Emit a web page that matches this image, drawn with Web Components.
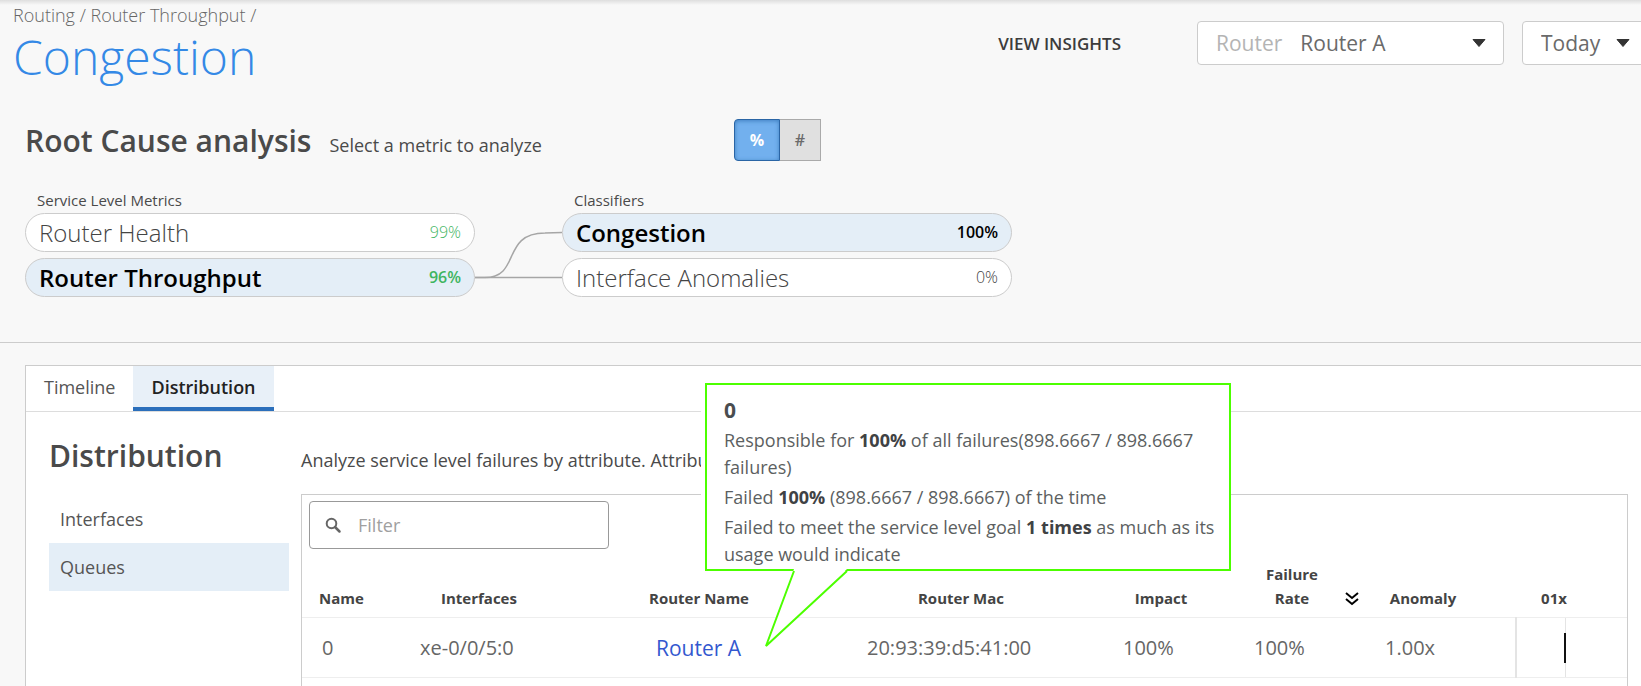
<!DOCTYPE html>
<html lang="en">
<head>
<meta charset="utf-8">
<title>Congestion</title>
<style>
  body{
    margin:0;
    font-family:"Open Sans", sans-serif;
    font-size:18px;
    color:#4a4a4a;
    background-color:#f8f8f8;
    overflow:hidden;
  }
</style>
</head>
<body>
<insights-page></insights-page>

<script>
window.customElements.define('page-header',
class Element extends HTMLElement {

  html(){
    return `
    <div class="titles">
      <nav><a href="#routing">Routing</a> / <a href="#throughput">Router Throughput</a> /</nav>
      <h1><slot></slot></h1>
    </div>
    <div class="tools">
      <a class="insights" href="#insights">VIEW INSIGHTS</a>
      <drop-down label="Router" value="Router A" class="router"></drop-down>
      <drop-down value="Today" class="date"></drop-down>
    </div>
    `;
  }

  style(){
    return `
    :host{
      display:flex;
      justify-content:space-between;
      height:108px;
      padding-left:13px;
      margin-right:-7px;
      background:linear-gradient(#dedede, #f8f8f8 5px);
    }

    nav{
      padding-top:3px;
      font-weight:300;
      line-height:24px;
      color:#666;
    }

    a{
      color:inherit;
      text-decoration:none;
    }

    h1{
      margin:0;
      font-size:48px;
      font-weight:300;
      line-height:60px;
      color:#3489e6;
    }

    .tools{
      display:flex;
      align-items:center;
      height:44px;
      padding-top:21px;
    }

    .insights{
      font-size:17px;
      font-weight:600;
      color:#3c3c3c;
      margin-right:76px;
    }

    .router{
      width:307px;
      margin-right:18px;
    }

    .date{
      width:126px;
    }
    `;
  }

  constructor(){super();
    this.attachShadow({mode:'open'});
    this.render();
  }

  render(){
    this.shadowRoot.innerHTML = `
      <style>${this.style()}</style>
      ${this.html()}
    `;
  }

})

window.customElements.define('drop-down',
class Element extends HTMLElement {

  html(){
    const label = this.getAttribute('label');
    const value = this.getAttribute('value');
    return `
    ${label ? `<label for="list">${label}</label>` : ''}
    <select id="list" ${label ? '' : 'aria-label="Date"'}>
      <option>${value}</option>
    </select>
    <svg width="14" height="8" viewBox="0 0 14 8"><path d="M1 0.5H13L7 7.5Z" fill="#333" stroke="#333" stroke-linejoin="round"/></svg>
    `;
  }

  style(){
    return `
    :host{
      display:flex;
      align-items:center;
      gap:18px;
      box-sizing:border-box;
      height:44px;
      padding:0 17px 0 18px;
      font-size:21px;
      background-color:#fff;
      border:1px solid #ccc;
      border-radius:4px;
    }

    label{
      color:#b4b4b4;
    }

    select{
      flex:1;
      min-width:0;
      padding:0;
      font:inherit;
      color:#6a6a6a;
      appearance:none;
      background:none;
      border:none;
    }

    svg{
      flex:none;
      margin-left:-18px;
    }
    `;
  }

  constructor(){super();
    this.attachShadow({mode:'open'});
  }

  connectedCallback(){
    this.shadowRoot.innerHTML = `
      <style>${this.style()}</style>
      ${this.html()}
    `;
  }

})

window.customElements.define('unit-toggle',
class Element extends HTMLElement {

  html(){
    return `
    <button class="activo">%</button>
    <button>#</button>
    `;
  }

  style(){
    return `
    :host{
      display:flex;
    }

    button{
      height:42px;
      width:41px;
      padding:0;
      font:600 16px "Open Sans", sans-serif;
      color:#6b6b6b;
      background-color:#e0e0e0;
      border:1px solid #aaa;
      border-left:none;
      cursor:pointer;
    }

    button:first-of-type{
      width:46px;
      border-left:1px solid #aaa;
      border-radius:4px 0 0 4px;
    }

    button.activo{
      font-weight:700;
      color:#fff;
      background-color:#72b0ee;
      border:1px solid #2a65a5;
      box-shadow:inset 0 1px 4px #3f7fc0;
    }
    `;
  }

  constructor(){super();
    this.attachShadow({mode:'open'});
    this.shadowRoot.innerHTML = `
      <style>${this.style()}</style>
      ${this.html()}
    `;
  }

  connectedCallback(){
    const btns = this.shadowRoot.querySelectorAll('button');

    btns.forEach(btn => btn.addEventListener('click',()=>{
      btns.forEach(b => b.classList.toggle('activo', b === btn));
    }))
  }

})

window.customElements.define('metric-pill',
class Element extends HTMLElement {

  html(){
    return `
    <button>
      <span><slot></slot></span>
      <span class="value">${this.getAttribute('value')}</span>
    </button>
    `;
  }

  style(){
    return `
    :host{
      display:block;
    }

    button{
      display:flex;
      align-items:center;
      justify-content:space-between;
      box-sizing:border-box;
      width:100%;
      height:39px;
      padding:0 13px 1px;
      font:300 24px "Open Sans", sans-serif;
      color:#444;
      background-color:#fff;
      border:1px solid #ccc;
      border-radius:20px;
      cursor:pointer;
    }

    .value{
      font-size:16px;
      color:var(--value-color, inherit);
    }

    :host([selected]) button{
      font-weight:600;
      color:#000;
      background-color:#e4eef7;
    }
    `;
  }

  constructor(){super();
    this.attachShadow({mode:'open'});
  }

  connectedCallback(){
    this.shadowRoot.innerHTML = `
      <style>${this.style()}</style>
      ${this.html()}
    `;
  }

})

window.customElements.define('root-cause',
class Element extends HTMLElement {

  html(){
    return `
    <header>
      <div class="heading">
        <h2>Root Cause analysis</h2>
        <p>Select a metric to analyze</p>
      </div>
      <unit-toggle></unit-toggle>
    </header>
    <div class="flow">
      <section>
        <h3>Service Level Metrics</h3>
        <metric-pill value="99%" class="good">Router Health</metric-pill>
        <metric-pill value="96%" class="good" selected>Router Throughput</metric-pill>
      </section>
      <svg width="87" height="84" viewBox="0 0 87 84" fill="none" stroke="#a6a6a6" stroke-width="1.5">
        <path d="M0 64.5H87"/>
        <path d="M0 64.5H10C46 64.5 26 20 70 20L87 19.500"/>
      </svg>
      <section>
        <h3>Classifiers</h3>
        <metric-pill value="100%" selected>Congestion</metric-pill>
        <metric-pill value="0%">Interface Anomalies</metric-pill>
      </section>
    </div>
    `;
  }

  style(){
    return `
    :host{
      display:block;
      padding:11px 25px 45px;
      border-bottom:1px solid #ccc;
    }

    header{
      display:flex;
      align-items:center;
    }

    .heading{
      display:flex;
      align-items:baseline;
      gap:18px;
      width:709px;
      padding-top:2px;
    }

    h2, h3, p{
      margin:0;
    }

    h2{
      font-size:30px;
      font-weight:600;
      line-height:40px;
    }

    .flow{
      display:flex;
      align-items:flex-end;
      margin-top:29px;
    }

    section{
      display:flex;
      flex-direction:column;
      gap:6px;
      width:450px;
    }

    h3{
      padding-left:12px;
      margin-bottom:-4px;
      font-size:15px;
      font-weight:400;
      line-height:21px;
    }

    .good{
      --value-color:#3fb55f;
    }
    `;
  }

  constructor(){super();
    this.attachShadow({mode:'open'});
    this.render();
  }

  render(){
    this.shadowRoot.innerHTML = `
      <style>${this.style()}</style>
      ${this.html()}
    `;
  }

})

window.customElements.define('call-out',
class Element extends HTMLElement {

  html(){
    return `
    <div class="box"><slot></slot></div>
    <svg width="84" height="80" viewBox="0 0 84 80">
      <path d="M29 0L1 77L82 0Z" fill="#fff"/>
      <path d="M29 2L1 77L82 2" fill="none" stroke="#4cff00" stroke-width="2"/>
    </svg>
    `;
  }

  style(){
    return `
    :host{
      display:block;
      width:526px;
      color:#5c5f61;
    }

    .box{
      box-sizing:border-box;
      height:188px;
      padding:8px 8px 0 17px;
      background-color:#fff;
      border:2px solid #4cff00;
      box-shadow:-4px 0 #fff;
    }

    svg{
      display:block;
      margin:-2px 0 0 60px;
    }
    `;
  }

  constructor(){super();
    this.attachShadow({mode:'open'});
    this.shadowRoot.innerHTML = `
      <style>${this.style()}</style>
      ${this.html()}
    `;
  }

})

window.customElements.define('queue-table',
class Element extends HTMLElement {

  html(){
    return `
    <div class="filter">
      <svg width="17" height="17" viewBox="0 0 17 17" fill="none" stroke="#666">
        <circle cx="6.500" cy="6.500" r="4.800" stroke-width="2"/>
        <path d="M10 10L14.500 14.500" stroke-width="2.500" stroke-linecap="round"/>
      </svg>
      <input type="text" placeholder="Filter" aria-label="Filter">
    </div>
    <table>
      <colgroup>
        <col style="width:118px"><col style="width:213px"><col style="width:234px"><col>
        <col style="width:131px"><col style="width:131px"><col style="width:131px"><col style="width:111px">
      </colgroup>
      <thead>
        <tr>
          <th class="name"><span>Name</span></th>
          <th class="interfaces"><span>Interfaces</span></th>
          <th class="router"><span>Router Name</span></th>
          <th class="mac"><span>Router Mac</span></th>
          <th><span>Impact</span></th>
          <th><span>Failure Rate</span><svg width="14" height="14" viewBox="0 0 14 14" fill="none" stroke="#000" stroke-width="2"><path d="M1 1L7 6L13 1M1 7L7 12L13 7"/></svg></th>
          <th><span>Anomaly</span></th>
          <th><span>01x</span></th>
        </tr>
      </thead>
      <tbody>
        <tr>
          <td class="name">0</td>
          <td>xe-0/0/5:0</td>
          <td class="router"><a href="#router-a">Router A</a></td>
          <td>20:93:39:d5:41:00</td>
          <td>100%</td>
          <td>100%</td>
          <td>1.00x</td>
          <td class="chart"><svg width="100" height="59" viewBox="0 0 100 59">
            <rect x="48" width="1" height="59" fill="#e4e4e4"/>
            <rect x="47" y="15" width="2" height="30" fill="#111"/>
          </svg></td>
        </tr>
      </tbody>
    </table>
    `;
  }

  style(){
    return `
    :host{
      display:block;
      box-sizing:border-box;
      padding-top:6px;
      background-color:#fff;
      border:1px solid #ccc;
      border-bottom:none;
    }

    .filter{
      display:flex;
      align-items:center;
      gap:16px;
      box-sizing:border-box;
      width:300px;
      height:48px;
      margin-left:7px;
      padding:0 15px;
      border:1px solid #999;
      border-radius:4px;
    }

    input{
      flex:1;
      min-width:0;
      padding:0;
      font:18px "Open Sans", sans-serif;
      color:inherit;
      border:none;
      outline:none;
    }

    input::placeholder{
      color:#a0a0a0;
    }

    table{
      width:100%;
      table-layout:fixed;
      border-collapse:collapse;
    }

    th{
      padding:13px 0 7px;
      font-size:15px;
      font-weight:700;
      line-height:24px;
      text-align:left;
      vertical-align:bottom;
      white-space:nowrap;
      color:#444;
    }

    th span{
      display:inline-block;
      width:76px;
      text-align:center;
      white-space:normal;
    }

    th svg{
      margin-left:15px;
      vertical-align:-2px;
    }

    th.name span{
      width:44px;
    }

    th.interfaces span{
      width:118px;
    }

    th.router span{
      width:132px;
    }

    th.mac span{
      width:188px;
    }

    td{
      height:59px;
      padding:0;
      font-size:20px;
      color:#666;
      border-top:1px solid #eee;
      border-bottom:1px solid #eee;
    }

    .name{
      padding-left:17px;
    }

    td.name{
      padding-left:20px;
    }

    td.router{
      padding-left:23px;
    }

    td a{
      font-size:21px;
      color:#3358cf;
      text-decoration:none;
    }

    .chart{
      border-left:2px solid #e4e4e4;
    }

    .chart svg{
      display:block;
    }
    `;
  }

  constructor(){super();
    this.attachShadow({mode:'open'});
    this.render();
  }

  render(){
    this.shadowRoot.innerHTML = `
      <style>${this.style()}</style>
      ${this.html()}
    `;
  }

})

window.customElements.define('distribution-panel',
class Element extends HTMLElement {

  html(){
    return `
    <div class="tabs" role="tablist">
      <button role="tab">Timeline</button>
      <button role="tab" class="activo">Distribution</button>
    </div>
    <div class="body">
      <aside>
        <h2>Distribution</h2>
        <nav>
          <a href="#interfaces">Interfaces</a>
          <a href="#queues" class="activo">Queues</a>
        </nav>
      </aside>
      <main>
        <p class="intro">Analyze service level failures by attribute. Attribu</p>
        <queue-table></queue-table>
      </main>
    </div>
    <call-out>
      <h4>0</h4>
      <p>Responsible for <b>100%</b> of all failures(898.6667 / 898.6667<br>failures)</p>
      <p>Failed <b>100%</b> (898.6667 / 898.6667) of the time</p>
      <p>Failed to meet the service level goal <b>1 times</b> as much as its<br>usage would indicate</p>
    </call-out>
    `;
  }

  style(){
    return `
    :host{
      display:flex;
      flex-direction:column;
      position:relative;
      margin:22px -8px 0 25px;
      background-color:#fff;
      border:1px solid #ccc;
      border-bottom:none;
    }

    .tabs{
      display:flex;
      border-bottom:1px solid #ddd;
    }

    button{
      height:45px;
      padding:0 18px;
      font:18px "Open Sans", sans-serif;
      color:#555;
      background:none;
      border:none;
      border-bottom:4px solid transparent;
      cursor:pointer;
    }

    button.activo{
      font-weight:600;
      color:#222;
      background-color:#e8f0f8;
      border-bottom-color:#2b6fbb;
    }

    .body{
      display:flex;
      flex:1;
      gap:12px;
      padding:0 20px 0 23px;
    }

    aside{
      width:240px;
    }

    h2, h4, p{
      margin:0;
    }

    h2{
      padding:23px 0 18px;
      font-size:30px;
      font-weight:600;
      line-height:42px;
    }

    nav a{
      display:block;
      padding-left:11px;
      line-height:48px;
      color:#555;
      text-decoration:none;
    }

    nav a.activo{
      background-color:#e4eef7;
    }

    main{
      display:flex;
      flex-direction:column;
      flex:1;
      min-width:0;
    }

    .intro{
      padding:35px 0 21px;
      line-height:26px;
    }

    queue-table{
      flex:1;
    }

    call-out{
      position:absolute;
      left:679px;
      top:17px;
    }

    h4{
      font-size:21px;
      line-height:34px;
      color:#4a4d4f;
    }

    call-out p{
      margin-bottom:3px;
      line-height:27px;
    }

    b{
      color:#3f4244;
    }
    `;
  }

  constructor(){super();
    this.attachShadow({mode:'open'});
    this.render();
  }

  connectedCallback(){
    const tabs = this.shadowRoot.querySelectorAll('button');

    tabs.forEach(tab => tab.addEventListener('click',()=>{
      tabs.forEach(t => t.classList.toggle('activo', t === tab));
    }))
  }

  render(){
    this.shadowRoot.innerHTML = `
      <style>${this.style()}</style>
      ${this.html()}
    `;
  }

})

window.customElements.define('insights-page',
class Element extends HTMLElement {

  html(){
    return `
    <page-header>Congestion</page-header>
    <root-cause></root-cause>
    <distribution-panel></distribution-panel>
    `;
  }

  style(){
    return `
    :host{
      display:flex;
      flex-direction:column;
      min-height:100vh;
    }

    distribution-panel{
      flex:1;
    }
    `;
  }

  constructor(){super();
    this.attachShadow({mode:'open'});
    this.render();
  }

  render(){
    this.shadowRoot.innerHTML = `
      <style>${this.style()}</style>
      ${this.html()}
    `;
  }

})
</script>
</body>
</html>
